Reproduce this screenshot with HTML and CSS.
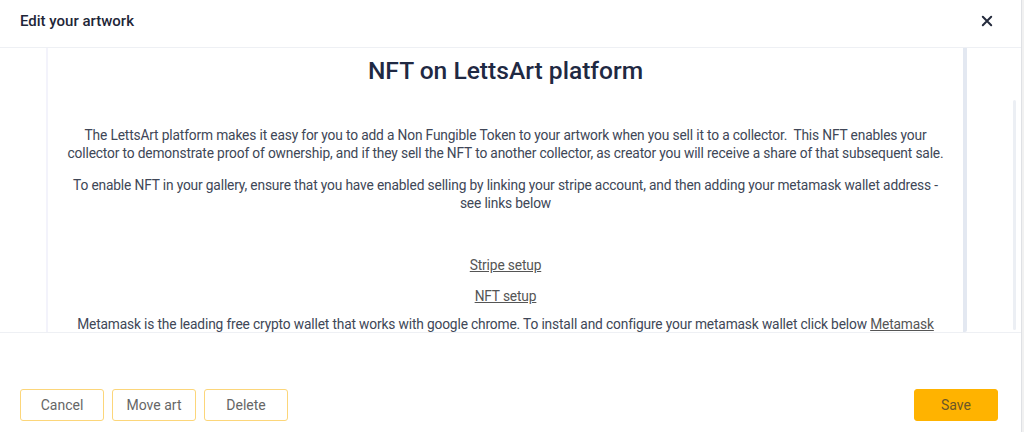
FILE: index.html
```html
<!DOCTYPE html>
<html lang="en">
<head>
    <meta charset="UTF-8">
    <meta name="viewport" content="width=device-width, initial-scale=1.0">
    <title>Edit your artwork</title>
    <link rel="stylesheet" href="styles.css">
</head>
<body>
    <div class="modal">
        <header class="modal-header">
            <h2>Edit your artwork</h2>
            <button class="close-btn" aria-label="Close">
                <svg width="12" height="12" viewBox="0 0 12 12">
                    <path d="M1.8 1.8 L10.2 10.2 M10.2 1.8 L1.8 10.2" stroke="#252c3d" stroke-width="2" stroke-linecap="round"/>
                </svg>
            </button>
        </header>

        <div class="modal-body">
            <div class="article">
                <h1>NFT on LettsArt platform</h1>
                <p>The LettsArt platform makes it easy for you to add a Non Fungible Token to your artwork when you sell it to a collector.&nbsp; This NFT enables your collector to demonstrate proof of ownership, and if they sell the NFT to another collector, as creator you will receive a share of that subsequent sale.</p>
                <p>To enable NFT in your gallery, ensure that you have enabled selling by linking your stripe account, and then adding your metamask wallet address - see links below</p>
                <p class="spacer">&nbsp;</p>
                <p class="link-row"><a href="#">Stripe setup</a></p>
                <p class="link-row last"><a href="#">NFT setup</a></p>
                <p>Metamask is the leading free crypto wallet that works with google chrome. To install and configure your metamask wallet click below <a href="#">Metamask</a></p>
            </div>
            <div class="scroll-thumb"></div>
        </div>

        <footer class="modal-footer">
            <div class="actions">
                <button class="btn">Cancel</button>
                <button class="btn">Move art</button>
                <button class="btn">Delete</button>
            </div>
            <button class="btn btn-save">Save</button>
        </footer>
    </div>
</body>
</html>
```

FILE: styles.css
```css
body {
    margin: 0;
    font-family: Roboto, "Liberation Sans", sans-serif;
    background-color: #f1f1f1;
    color: #3d4455;
}
.modal {
    width: 1021px;
    height: 432px;
    background-color: #fff;
    border-right: 1px solid #dfe1e5;
    display: flex;
    flex-direction: column;
}
.modal-header {
    height: 47px;
    border-bottom: 1px solid #eef0f4;
    display: flex;
    align-items: center;
    justify-content: space-between;
    padding: 0 28px 0 20px;
}
.modal-header h2 {
    margin: 0;
    font-size: 15px;
    font-weight: 500;
    color: #1e2638;
    margin-top: -5px;
}
.close-btn {
    border: none;
    background: none;
    padding: 0;
    margin-top: -5px;
    cursor: pointer;
    display: flex;
}
.modal-body {
    position: relative;
    height: 284px;
    padding: 0 54px 0 46px;
    border-bottom: 1px solid #eef0f4;
}
.article {
    height: 100%;
    overflow: hidden;
    border-left: 2px solid #f3f3fb;
    border-right: 4px solid #e3e8f1;
    border-bottom-right-radius: 2px;
    padding: 0 18px;
    text-align: center;
    font-size: 13.75px;
    letter-spacing: -0.15px;
    line-height: 18px;
    color: #404757;
}
.article h1 {
    margin: 9px 0 41px;
    font-size: 24.6px;
    line-height: 28px;
    font-weight: 500;
    letter-spacing: 0;
    color: #1f2943;
}
.article p {
    margin: 0 0 14px;
}
.article .spacer {
    margin-bottom: 12px;
}
.article .link-row {
    margin-bottom: 13px;
}
.article .link-row.last {
    margin-bottom: 10px;
}
.article a {
    color: #555;
    text-decoration: underline;
}
.scroll-thumb {
    position: absolute;
    right: 5px;
    top: 52px;
    bottom: 2px;
    width: 3px;
    border-radius: 2px;
    background-color: #eceff4;
}
.modal-footer {
    flex: 1;
    display: flex;
    justify-content: space-between;
    align-items: flex-start;
    padding: 56px 23px 0 20px;
}
.actions {
    display: flex;
    gap: 8px;
}
.btn {
    width: 84px;
    height: 32px;
    font-family: inherit;
    font-size: 14px;
    color: #666;
    background-color: #fff;
    border: 1px solid #fcd67a;
    border-radius: 3px;
    cursor: pointer;
}
.btn-save {
    background-color: #ffb300;
    border-color: #ffb300;
    color: #6b5628;
}
```
